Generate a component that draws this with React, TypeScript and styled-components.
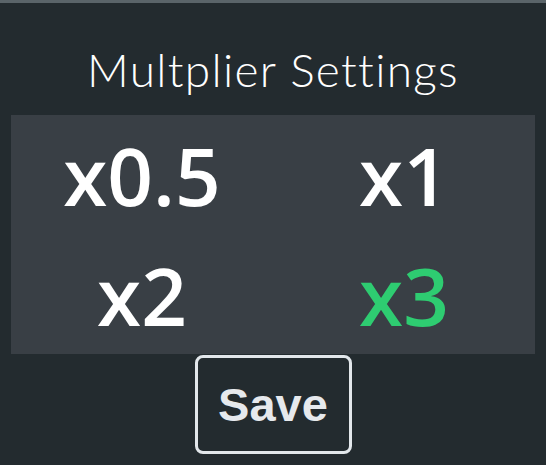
import styled, { createGlobalStyle } from "styled-components";

const GlobalStyle = createGlobalStyle`
  html, body {
    margin: 0;
    padding: 0;
    background-color: #232b2f;
  }
`;

const options = [
  { label: "x0.5", value: 0.5 },
  { label: "x1", value: 1 },
  { label: "x2", value: 2 },
  { label: "x3", value: 3 },
];

const App = () => {
  const selected = 3;
  return (
    <>
      <GlobalStyle />
      <SettingsStyle>
        <Heading>Multplier Settings</Heading>
        <OptionGrid>
          {options.map((option) => (
            <Option key={option.value} $active={option.value === selected}>
              {option.label}
            </Option>
          ))}
        </OptionGrid>
        <SaveButton>Save</SaveButton>
      </SettingsStyle>
    </>
  );
};

const SettingsStyle = styled.div`
  display: flex;
  flex-direction: column;
  align-items: center;
  width: 546px;
  height: 465px;
  box-sizing: border-box;
  border-top: 3px solid #5a6469;
  padding: 0 11px;
  background-color: #232b2f;
`;

const Heading = styled.h1`
  margin: 38px 0 0;
  height: 74px;
  font-family: "Lato", sans-serif;
  font-weight: 300;
  font-size: 46px;
  line-height: 58px;
  letter-spacing: 1.3px;
  color: #ffffff;
`;

const OptionGrid = styled.div`
  display: grid;
  grid-template-columns: 1fr 1fr;
  grid-auto-rows: 119.5px;
  width: 100%;
  background-color: #393f45;
`;

const Option = styled.div<{ $active: boolean }>`
  display: flex;
  align-items: center;
  justify-content: center;
  font-family: "Open Sans", sans-serif;
  font-weight: 600;
  font-size: 80px;
  color: ${({ $active }) => ($active ? "#2ecc71" : "#ffffff")};
  cursor: pointer;
`;

const SaveButton = styled.button`
  margin-top: 1px;
  width: 157px;
  height: 99px;
  border: 3px solid #e2e7eb;
  border-radius: 8px;
  background-color: #232b2f;
  color: #e6e9ed;
  font-family: "Liberation Sans", Arial, sans-serif;
  font-weight: 700;
  font-size: 47px;
  cursor: pointer;
`;

export default App;
